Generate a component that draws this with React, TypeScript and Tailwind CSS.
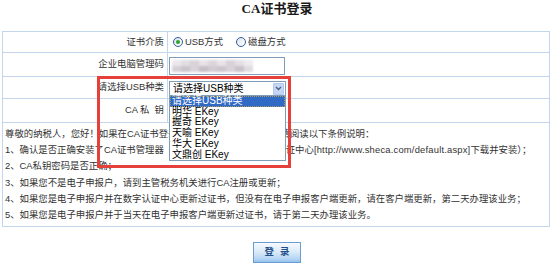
import React from 'react';

const usbTypes = ['明华 EKey', '握奇 EKey', '天喻 EKey', '华大 EKey', '文鼎创 EKey'];

const notes: React.ReactNode[] = [
  '尊敬的纳税人，您好！如果在CA证书登录时出现异常或错误提示，请阅读以下条例说明：',
  <>
    1、确认是否正确安装了CA证书管理器（可以登录上海市数字证书认证中心
    <span className="tracking-[0.2px]">[http://www.sheca.com/default.aspx]</span>下载并安装）；
  </>,
  '2、CA私钥密码是否正确；',
  '3、如果您不是电子申报户，请到主管税务机关进行CA注册或更新；',
  '4、如果您是电子申报户并在数字认证中心更新过证书，但没有在电子申报客户端更新，请在客户端更新，第二天办理该业务；',
  '5、如果您是电子申报户并于当天在电子申报客户端更新过证书，请于第二天办理该业务。',
];

// blurred-out management code
const mosaic = [
  ['#ebe8eb', '#e2dde2', '#d9d3d9', '#e6e2e6', '#dcd6dc', '#e8e4e8', '#d8d2d8', '#e4dfe4', '#eeeaee'],
  ['#d6d0d6', '#cbc4cb', '#d9d3d9', '#c6bfc6', '#d2cbd2', '#cdc6cd', '#d8d1d8', '#c9c2c9', '#e0dbe0'],
];

function Radio({ checked }: { checked?: boolean }) {
  return (
    <span className="w-[10px] h-[10px] rounded-full border border-[#2f5f9e] bg-gradient-to-br from-[#dde2ea] to-white flex items-center justify-center shrink-0">
      {checked && <span className="w-[4px] h-[4px] rounded-full bg-[#2ea32e]" />}
    </span>
  );
}

function FormRow({ label, height, children }: { label: string; height: string; children?: React.ReactNode }) {
  return (
    <div className={`flex border-b border-[#c3d6eb] ${height}`}>
      <div className="w-[165px] shrink-0 border-r border-[#c3d6eb] flex items-center justify-end pr-[3px] whitespace-pre">
        {label}
      </div>
      <div className="flex items-center pl-[1px]">{children}</div>
    </div>
  );
}

export default function App() {
  return (
    <div className="relative w-[554px] h-[266px] overflow-hidden bg-white text-[#333] font-['Liberation_Sans','Noto_Sans_CJK_SC',sans-serif] text-[9.4px]">
      <h1 className="h-[31px] pt-[1px] text-center text-[13px] leading-[15px] font-bold text-[#1a1a1a] font-['Liberation_Serif','Noto_Sans_CJK_SC',serif]">
        CA证书登录
      </h1>

      <div className="ml-[2px] w-[548px] border border-[#c3d6eb]">
        <FormRow label="证书介质" height="h-[21px]">
          <div className="flex items-center pl-[4px]">
            <Radio checked />
            <span className="ml-[2px]">USB方式</span>
            <span className="ml-[13px]">
              <Radio />
            </span>
            <span className="ml-[2px]">磁盘方式</span>
          </div>
        </FormRow>

        <FormRow label="企业电脑管理码" height="h-[24px]">
          <div className="w-[116px] h-[18px] mt-[2px] border border-[#7f9db9] bg-white pl-[2px] pt-[2px] overflow-hidden">
            <div className="blur-[1px]">
              {mosaic.map((row, i) => (
                <div key={i} className="flex">
                  {row.map((c, j) => (
                    <span key={j} className="w-[9px] h-[6px]" style={{ background: c }} />
                  ))}
                </div>
              ))}
            </div>
          </div>
        </FormRow>

        <FormRow label="请选择USB种类" height="h-[22px]">
          <div className="w-[117px] h-[15px] mt-[2px] border border-[#7f9db9] bg-white flex items-center justify-between text-[10px] text-black">
            <span className="pl-[3px] leading-[13px]">请选择USB种类</span>
            <span className="w-[11px] h-[12px] mr-[1px] bg-[#c5d6f6] border border-[#b3c8ef] rounded-[1px] flex items-center justify-center">
              <svg width="7" height="5" viewBox="0 0 7 5">
                <path d="M1 1 L3.5 3.5 L6 1" stroke="#4d6185" strokeWidth="1.4" fill="none" />
              </svg>
            </span>
          </div>
        </FormRow>

        <FormRow label="CA 私  钥" height="h-[24px]">
          <div className="w-[116px] h-[18px] mt-[2px] border border-[#7f9db9] bg-white" />
        </FormRow>

        <div className="h-[103px] pl-[2px] pt-[3px] leading-[16.2px] whitespace-nowrap">
          {notes.map((n, i) => (
            <p key={i}>{n}</p>
          ))}
        </div>
      </div>

      <div className="flex justify-center pt-[15px]">
        <button className="w-[48px] h-[21px] border border-[#6b9dd3] bg-[linear-gradient(#f6faff,#dcebfa_45%,#b3d4f4_85%,#92c2ef)] flex items-center justify-center gap-[6px] text-[9.4px] font-bold text-[#245089]">
          <span>登</span>
          <span>录</span>
        </button>
      </div>

      {/* open dropdown list */}
      <div className="absolute left-[169px] top-[95px] w-[117px] bg-white border border-[#7f9db9] text-[10px] leading-[10.7px] text-black">
        <div className="bg-[#316ac5] text-white pl-[2px] outline outline-1 outline-dotted outline-[#a89a5c] -outline-offset-1">
          请选择USB种类
        </div>
        {usbTypes.map((t) => (
          <div key={t} className="pl-[2px] whitespace-pre">
            {t}
          </div>
        ))}
      </div>

      {/* highlight annotation */}
      <div className="absolute left-[97px] top-[76px] w-[194px] h-[92px] border-[3px] border-[#e5403a]" />
    </div>
  );
}
